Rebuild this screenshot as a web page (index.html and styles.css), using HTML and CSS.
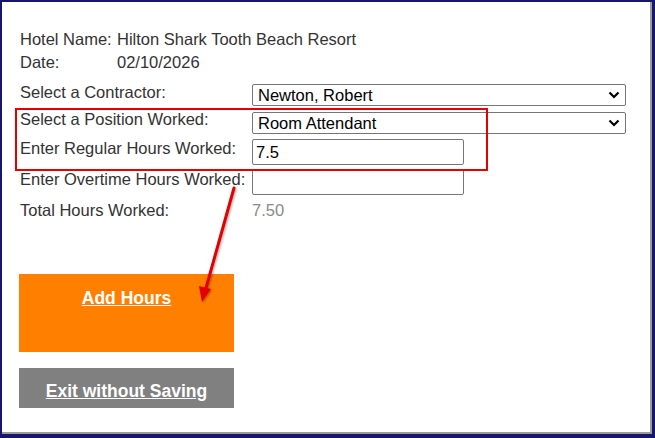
FILE: index.html
```html
<!DOCTYPE html>
<html>
<head>
<meta charset="utf-8">
<link rel="stylesheet" href="styles.css">
</head>
<body>
<div class="frame">
  <div class="content">
    <div class="info">
      <div class="info-row"><span class="info-label">Hotel Name:</span><span>Hilton Shark Tooth Beach Resort</span></div>
      <div class="info-row"><span class="info-label">Date:</span><span>02/10/2026</span></div>
    </div>
    <div class="form">
      <div class="row row-sel">
        <label class="lbl">Select a Contractor:</label>
        <span class="sel-wrap">
          <select class="sel"><option>Newton, Robert</option></select>
          <svg class="chev" width="12" height="8" viewBox="0 0 12 8"><path d="M1.5 1.5 L6 6 L10.5 1.5" fill="none" stroke="#000" stroke-width="2.2"/></svg>
        </span>
      </div>
      <div class="row row-sel2">
        <label class="lbl">Select a Position Worked:</label>
        <span class="sel-wrap">
          <select class="sel"><option>Room Attendant</option></select>
          <svg class="chev" width="12" height="8" viewBox="0 0 12 8"><path d="M1.5 1.5 L6 6 L10.5 1.5" fill="none" stroke="#000" stroke-width="2.2"/></svg>
        </span>
      </div>
      <div class="row row-in">
        <label class="lbl">Enter Regular Hours Worked:</label>
        <input class="inp" type="text" value="7.5">
      </div>
      <div class="row row-in2">
        <label class="lbl">Enter Overtime Hours Worked:</label>
        <input class="inp" type="text" value="">
      </div>
      <div class="row">
        <span class="lbl">Total Hours Worked:</span>
        <span class="total">7.50</span>
      </div>
    </div>
    <div class="buttons">
      <a class="btn btn-add" href="#">Add Hours</a>
      <a class="btn btn-exit" href="#">Exit without Saving</a>
    </div>

    <div class="highlight"></div>
    <svg class="arrow" width="655" height="438" viewBox="0 0 655 438">
      <defs>
        <filter id="sh" x="-50%" y="-50%" width="200%" height="200%">
          <feDropShadow dx="1" dy="1" stdDeviation="1" flood-color="#000" flood-opacity="0.35"/>
        </filter>
      </defs>
      <g filter="url(#sh)">
        <line x1="234" y1="188" x2="206" y2="288" stroke="#e30000" stroke-width="3" stroke-linecap="round"/>
        <polygon points="202,302 199,286 211,289" fill="#e30000"/>
      </g>
    </svg>
  </div>
</div>
</body>
</html>
```
FILE: styles.css
```css
* { box-sizing: border-box; }
html, body {
  margin: 0;
  padding: 0;
  width: 655px;
  height: 438px;
  overflow: hidden;
}
body {
  font-family: "Liberation Sans", Arial, sans-serif;
  font-size: 16.5px;
  color: #333;
}
.frame {
  width: 655px;
  height: 438px;
  background: #16166a;
  padding: 2px 3px 4px 2px;
}
.content {
  position: relative;
  width: 100%;
  height: 100%;
  background: #fff;
  border-right: 2px solid #9a9a9a;
  border-bottom: 2px solid #9a9a9a;
  padding: 28px 0 0 18px;
}
.info-row {
  display: grid;
  grid-template-columns: 97px auto;
  line-height: 18px;
  margin-bottom: 5px;
}
.info { margin-bottom: 13px; }
.form { display: flex; flex-direction: column; }
.row {
  display: grid;
  grid-template-columns: 232px auto;
  align-items: start;
  line-height: 18px;
}
.row-sel { margin-bottom: 6px; }
.row-sel2 { margin-bottom: 5px; }
.row-in { margin-bottom: 4px; }
.row-in2 { margin-bottom: 6px; }
.lbl { white-space: nowrap; }
.row-sel .lbl { margin-top: -1px; }
.row-sel2 .lbl { margin-top: -2px; }
.row-in2 .lbl { margin-top: 1px; }
.sel-wrap {
  position: relative;
  display: block;
  width: 374px;
  height: 22px;
}
.sel {
  -webkit-appearance: none;
  appearance: none;
  display: block;
  width: 374px;
  height: 22px;
  font-family: "Liberation Sans", Arial, sans-serif;
  font-size: 16.5px;
  color: #000;
  border: 1px solid #767676;
  border-radius: 2px;
  background: #fff;
  padding: 0 5px;
  margin: 0;
}
.chev {
  position: absolute;
  right: 6px;
  top: 7px;
  pointer-events: none;
}
.inp {
  width: 212px;
  height: 26px;
  font-family: "Liberation Sans", Arial, sans-serif;
  font-size: 16.5px;
  color: #000;
  border: 1px solid #767676;
  border-radius: 2px;
  padding: 1px 3px;
  margin: 0;
}
.total { color: #8a8a8a; }
.buttons {
  margin-top: 55px;
  margin-left: -1px;
  display: flex;
  flex-direction: column;
  width: 215px;
}
.btn {
  display: block;
  text-align: center;
  color: #fff;
  font-weight: bold;
  text-decoration: underline;
  line-height: 20px;
  font-size: 17.5px;
}
.btn-add {
  background: #ff8000;
  height: 78px;
  padding-top: 14px;
}
.btn-exit {
  background: #808080;
  height: 40px;
  margin-top: 16px;
  padding-top: 13px;
}
.highlight {
  position: absolute;
  left: 13px;
  top: 106px;
  width: 473px;
  height: 63px;
  border: 2px solid #e30000;
}
.arrow {
  position: absolute;
  left: -2px;
  top: -2px;
  pointer-events: none;
}
```
